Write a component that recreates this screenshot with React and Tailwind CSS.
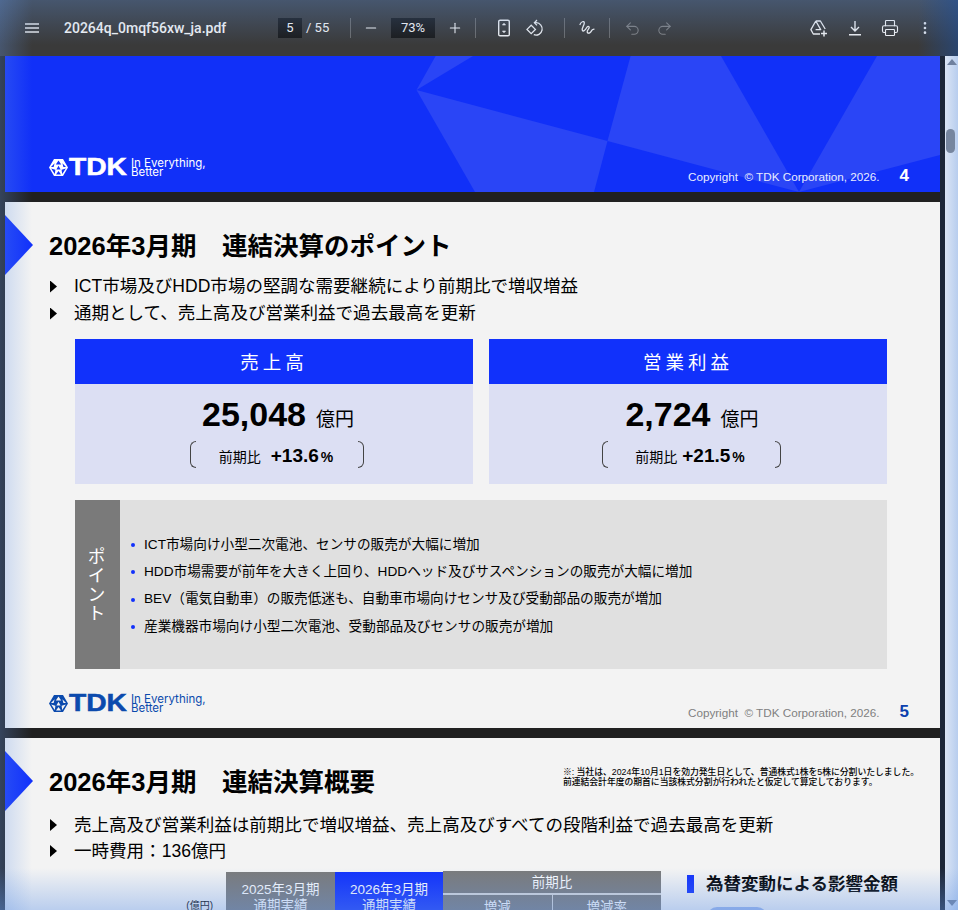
import React from 'react';
import { Minus, Plus, Undo2, Redo2, Printer, EllipsisVertical } from 'lucide-react';

const summaryCards = [
  { title: '売上高', value: '25,048', change: '+13.6', gapClass: 'gap-[10px]', bracketClass: 'w-[174px]' },
  { title: '営業利益', value: '2,724', change: '+21.5', gapClass: 'gap-[5px]', bracketClass: 'w-[179px]' },
];

const points = [
  'ICT市場向け小型二次電池、センサの販売が大幅に増加',
  'HDD市場需要が前年を大きく上回り、HDDヘッド及びサスペンションの販売が大幅に増加',
  'BEV（電気自動車）の販売低迷も、自動車市場向けセンサ及び受動部品の販売が増加',
  '産業機器市場向け小型二次電池、受動部品及びセンサの販売が増加',
];

function Divider({ className }) {
  return <div className={`h-5 w-px bg-[#6b6b6b] ${className}`}></div>;
}

function Toolbar() {
  return (
    <div className="flex h-14 items-center bg-[#3a3a3a] text-[#f5f5f5]">
      {/* Menu */}
      <svg width="14" height="10" viewBox="0 0 14 10" className="ml-[25px] shrink-0" stroke="#e8e8e8" strokeWidth="1.3">
        <path d="M0 1h14M0 5h14M0 9h14" />
      </svg>
      <div className="ml-[25px] w-[214px] shrink-0 font-['Roboto',sans-serif] text-[14px] font-medium">20264q_0mqf56xw_ja.pdf</div>

      {/* Page number */}
      <div className="flex h-5 w-6 shrink-0 items-center justify-center bg-[#191919] font-['Roboto',sans-serif] text-[13px]">5</div>
      <div className="ml-1 w-[44px] shrink-0 font-['Roboto',sans-serif] text-[13px]">/ 55</div>
      <Divider />

      {/* Zoom */}
      <Minus size={16} strokeWidth={1.6} className="ml-[12px] shrink-0" />
      <div className="ml-[12px] flex h-5 w-[44px] shrink-0 items-center justify-center bg-[#191919] font-['Roboto',sans-serif] text-[13px]">73%</div>
      <Plus size={16} strokeWidth={1.6} className="ml-[12px] shrink-0" />
      <Divider className="ml-[12px]" />

      {/* Fit to page */}
      <svg width="14" height="18" viewBox="0 0 14 18" fill="none" stroke="#efefef" strokeWidth="1.4" className="ml-[21px] shrink-0">
        <rect x="1.7" y="1.2" width="10.6" height="15.6" rx="1.4" />
        <path d="M7 4.2 5.4 6h3.2zM7 13.8 5.4 12h3.2z" fill="#efefef" strokeWidth="0.6" />
      </svg>

      {/* Rotate */}
      <svg width="18" height="18" viewBox="0 0 18 18" fill="none" stroke="#efefef" strokeWidth="1.3" className="ml-[15px] shrink-0">
        <path d="M5.2 6.2 9.4 10.4 5.2 14.6 1 10.4z" />
        <path d="M8.6 3.7h1.6a6.2 6.2 0 1 1-2.4 12" />
        <path d="M11 1 8.4 3.7 11 6.4" />
      </svg>
      <Divider className="ml-[20px]" />

      {/* Draw */}
      <svg width="16" height="16" viewBox="0 0 16 16" fill="none" stroke="#efefef" strokeWidth="1.3" strokeLinecap="round" className="ml-[14px] shrink-0">
        <path d="M1 4.5C2 1.5 5 .8 5.3 2.6 5.7 5 2.3 8 3.4 10.4c.8 1.7 3-.4 4.2-2.6.9-1.6 2.6-1.8 2.6-.4 0 1.6-2.4 2.6-2 4.6.3 1.6 2.3 1.6 3.4.2.8-1 .8-2.6 3.4-3" />
      </svg>
      <Divider className="ml-[14px]" />

      {/* Undo / redo */}
      <Undo2 size={17} strokeWidth={1.5} color="#808080" className="ml-[14px] shrink-0" />
      <Redo2 size={17} strokeWidth={1.5} color="#808080" className="ml-[15px] shrink-0" />

      {/* Add to Drive */}
      <svg width="18" height="17" viewBox="0 0 18 17" fill="none" stroke="#efefef" strokeWidth="1.3" className="ml-[137px] shrink-0">
        <path d="M5.8 1h4.6l4.8 8M5.8 1 .9 9.6l2.4 4.4H10M5.8 1l4.9 8.6H5.6" strokeLinejoin="round" />
        <path d="M14 10.5v6M11 13.5h6" strokeWidth="1.5" />
      </svg>

      {/* Download */}
      <svg width="14" height="15" viewBox="0 0 14 15" fill="none" stroke="#efefef" strokeWidth="1.4" className="ml-[20px] shrink-0">
        <path d="M7 0v9.5M3 6l4 4 4-4M1 13.8h12" />
      </svg>
      <Printer size={18} strokeWidth={1.5} className="ml-[19px] shrink-0" />
      <EllipsisVertical size={16} strokeWidth={2} className="ml-[18px] shrink-0" />
    </div>
  );
}

function TdkLogo({ dark }) {
  return (
    <div className={`flex items-center ${dark ? 'text-[#0b4aad]' : 'text-white'}`}>
      <svg width="19" height="17" viewBox="0 0 19 17" fill="currentColor" className="shrink-0">
        <path
          fillRule="evenodd"
          d="M5 0h9l5 8.5L14 17H5L0 8.5zM9.5 1.6 6.8 5.6h5.4zM2 8l2.6 0L5.6 4.2zM17 8l-2.6 0-1-3.8zM9.5 6.8 7.4 10.6h4.2zM2.2 9.6l3.6 5.4.6-4.2zM16.8 9.6 13.2 15l-.6-4.2zM9.5 12 7 15.6h5z"
        />
      </svg>
      <div className="ml-[1px] w-[61px] shrink-0">
        <div className="origin-left scale-x-[1.2] text-[23.5px] leading-[17px] font-bold [-webkit-text-stroke:0.5px]">TDK</div>
      </div>
      <div className="ml-[1px] pt-[2px] font-['Inter',sans-serif] text-[11.5px] leading-[9px]">
        <div>In Everything,</div>
        <div>Better</div>
      </div>
    </div>
  );
}

function SlideArrow() {
  return <div className="absolute top-[13px] left-0 h-[60px] w-[28px] bg-[#1131fb] [clip-path:polygon(0_0,100%_50%,0_100%)]"></div>;
}

function BulletLine({ children, className = 'h-[27px]' }) {
  return (
    <div className={`flex items-center text-[17.55px] ${className}`}>
      <span className="h-[12px] w-[7px] shrink-0 bg-black [clip-path:polygon(0_0,100%_50%,0_100%)]"></span>
      <span className="ml-[17px]">{children}</span>
    </div>
  );
}

function CoverSlide() {
  return (
    <div className="relative flex h-[136px] items-end justify-between overflow-hidden bg-[#1130f8] pr-[31px] pb-[5px] pl-[44px]">
      {/* Background facets */}
      <svg width="935" height="136" viewBox="0 0 935 136" className="absolute inset-0" fill="#2a45f6">
        <path d="M411.5 34 430.6 0H468z" />
        <path d="M411.5 34 602.5 85 589 136H470z" />
        <path d="M625.6 0H716l78 136-191.5-51z" />
        <path d="M872 0h63v99l-141 37z" />
      </svg>
      <div className="relative mb-[10px]">
        <TdkLogo />
      </div>
      <div className="relative flex h-[20px] items-center text-[#e8ecff]">
        <span className="text-[11.7px]">Copyright&nbsp; © TDK Corporation, 2026.</span>
        <span className="mb-[3px] ml-[20px] text-[17px] font-bold text-white">4</span>
      </div>
    </div>
  );
}

function SummaryCard({ card }) {
  return (
    <div className="w-[398px]">
      <div className="flex h-[45px] items-center justify-center bg-[#1131fb] pt-[3px] text-[18.5px] tracking-[4px] text-white">{card.title}</div>
      <div className="flex h-[100px] flex-col items-center bg-[#dcdff3] pt-[10px]">
        <div className="ml-[8px] flex h-[40px] items-baseline">
          <span className="text-[34px] leading-[40px] font-bold">{card.value}</span>
          <span className="ml-[10px] text-[19px]">億円</span>
        </div>
        <div className={`mt-[7px] ml-[6px] flex h-[27px] items-center justify-between ${card.bracketClass}`}>
          <span className="h-[27px] w-[6px] rounded-l-[6px] border-y border-l border-[#444444]"></span>
          <div className={`mr-[2px] flex items-baseline pt-[3px] ${card.gapClass}`}>
            <span className="text-[14px]">前期比</span>
            <span className="text-[19px] font-bold">
              {card.change}
              <span className="ml-[2px] text-[14px]">%</span>
            </span>
          </div>
          <span className="h-[27px] w-[6px] rounded-r-[6px] border-y border-r border-[#444444]"></span>
        </div>
      </div>
    </div>
  );
}

function PointsSlide() {
  return (
    <div className="relative flex h-[526px] flex-col bg-[#f3f3f3] pt-[26px]">
      <SlideArrow />
      <h1 className="ml-[44px] h-[36px] text-[25.5px] leading-[36px] font-bold">2026年3月期　連結決算のポイント</h1>
      <div className="mt-[9px] ml-[45px]">
        <BulletLine>ICT市場及びHDD市場の堅調な需要継続により前期比で増収増益</BulletLine>
        <BulletLine>通期として、売上高及び営業利益で過去最高を更新</BulletLine>
      </div>
      <div className="mt-[12px] ml-[70px] flex gap-[16px]">
        {summaryCards.map((card) => (
          <SummaryCard key={card.title} card={card} />
        ))}
      </div>
      <div className="mt-[16px] ml-[70px] flex h-[169px] w-[812px]">
        <div className="flex w-[45px] items-center justify-center bg-[#7a7a7a] pr-[7px] text-[18px] tracking-[1px] text-white [writing-mode:vertical-rl]">ポイント</div>
        <div className="flex flex-1 flex-col justify-center bg-[#e0e0e0] pt-[3px] pl-[11px] text-[13.65px]">
          {points.map((point) => (
            <div key={point} className="flex h-[27.3px] items-center">
              <span className="h-[4px] w-[4px] shrink-0 rounded-full bg-[#1131fb]"></span>
              <span className="ml-[9px]">{point}</span>
            </div>
          ))}
        </div>
      </div>
      <div className="mt-auto flex items-end justify-between pr-[31px] pb-[5px] pl-[44px]">
        <div className="mb-[10px]">
          <TdkLogo dark />
        </div>
        <div className="flex h-[20px] items-center text-[#808080]">
          <span className="text-[11.7px]">Copyright&nbsp; © TDK Corporation, 2026.</span>
          <span className="mb-[3px] ml-[20px] text-[17px] font-bold text-[#0b3fae]">5</span>
        </div>
      </div>
    </div>
  );
}

function OverviewSlide() {
  return (
    <div className="relative h-[172px] overflow-hidden bg-[#f3f3f3] pt-[26px]">
      <SlideArrow />
      <div className="flex h-[36px] items-start justify-between pr-[21px] pl-[44px]">
        <h1 className="text-[25.5px] leading-[36px] font-bold">2026年3月期　連結決算概要</h1>
        <div className="mt-[3px] text-[8.8px] leading-[10px] font-medium">
          <div>※: 当社は、2024年10月1日を効力発生日として、普通株式1株を5株に分割いたしました。</div>
          <div>前連結会計年度の期首に当該株式分割が行われたと仮定して算定しております。</div>
        </div>
      </div>
      <div className="mt-[12px] ml-[45px]">
        <BulletLine className="h-[26px]">売上高及び営業利益は前期比で増収増益、売上高及びすべての段階利益で過去最高を更新</BulletLine>
        <BulletLine className="h-[26px]">一時費用：136億円</BulletLine>
      </div>
      <div className="mt-[7px] flex">
        <div className="mt-[29px] mr-[13px] ml-[181px] w-[27px] text-right text-[10px] leading-[12px] whitespace-nowrap">(億円)</div>
        <div className="mt-[1px] flex w-[109px] flex-col items-center bg-[#7a7a7a] pt-[10px] text-[13.5px] leading-[16px] text-white">
          <div>2025年3月期</div>
          <div>通期実績</div>
        </div>
        <div className="mt-[1px] flex w-[108px] flex-col items-center bg-[#1131fb] pt-[10px] text-[13.5px] leading-[16px] text-white">
          <div>2026年3月期</div>
          <div>通期実績</div>
        </div>
        <div className="h-[40px] w-[218px] bg-[#7a7a7a] text-[13.5px] text-white">
          <div className="flex h-[24px] items-center justify-center border-b-2 border-[#d8d8d8] pt-[3px]">前期比</div>
          <div className="flex h-[16px]">
            <div className="flex-1 border-r border-[#d8d8d8] pt-[4px] text-center leading-[18px]">増減</div>
            <div className="flex-1 pt-[4px] text-center leading-[18px]">増減率</div>
          </div>
        </div>
        <div className="ml-[26px] pt-[3px]">
          <div className="flex h-[20px] items-center">
            <span className="h-[18px] w-[7px] bg-[#1131fb]"></span>
            <span className="ml-[12px] text-[17.5px] font-bold">為替変動による影響金額</span>
          </div>
          <div className="mt-[13px] ml-[20px] h-[20px] w-[60px] rounded-full bg-[#9db6ea]"></div>
        </div>
      </div>
    </div>
  );
}

export default function App() {
  return (
    <div className="relative h-[910px] w-[958px] overflow-hidden bg-[#202020] font-['Liberation_Sans','Noto_Sans_CJK_JP',sans-serif] text-black">
      <Toolbar />
      <div className="flex h-[854px]">
        <div className="flex w-[945px] flex-col gap-[10px] border-r-[5px] border-[#1d2738] pl-[5px]">
          <div className="w-[935px]">
            <CoverSlide />
          </div>
          <div className="w-[935px]">
            <PointsSlide />
          </div>
          <div className="w-[935px]">
            <OverviewSlide />
          </div>
        </div>
        {/* Scrollbar */}
        <div className="relative flex-1 bg-linear-to-r from-[#dbe5f5] to-[#b7cdee]">
          <div className="absolute top-[3px] left-[2px] h-0 w-0 border-x-[5px] border-b-[6px] border-x-transparent border-b-[#6f819f]"></div>
          <div className="absolute top-[73px] left-[1px] h-[24px] w-[9px] rounded-full bg-[#76869f]"></div>
          <div className="absolute bottom-[4px] left-[2px] h-0 w-0 border-x-[5px] border-t-[6px] border-x-transparent border-t-[#6f819f]"></div>
        </div>
      </div>

      {/* Window edge glow */}
      <div className="pointer-events-none absolute inset-y-0 left-0 w-[32px] bg-linear-to-r from-[#6496e64d] to-transparent"></div>
      <div className="pointer-events-none absolute inset-x-0 top-0 h-[45px] bg-linear-to-b from-[#5f8fd655] to-transparent"></div>
      <div className="pointer-events-none absolute top-0 right-0 h-[56px] w-[40px] bg-linear-to-r from-transparent to-[#1d4f9c88]"></div>
      <div className="pointer-events-none absolute inset-x-0 bottom-0 h-[42px] bg-linear-to-b from-transparent to-[#6496e666]"></div>
    </div>
  );
}
